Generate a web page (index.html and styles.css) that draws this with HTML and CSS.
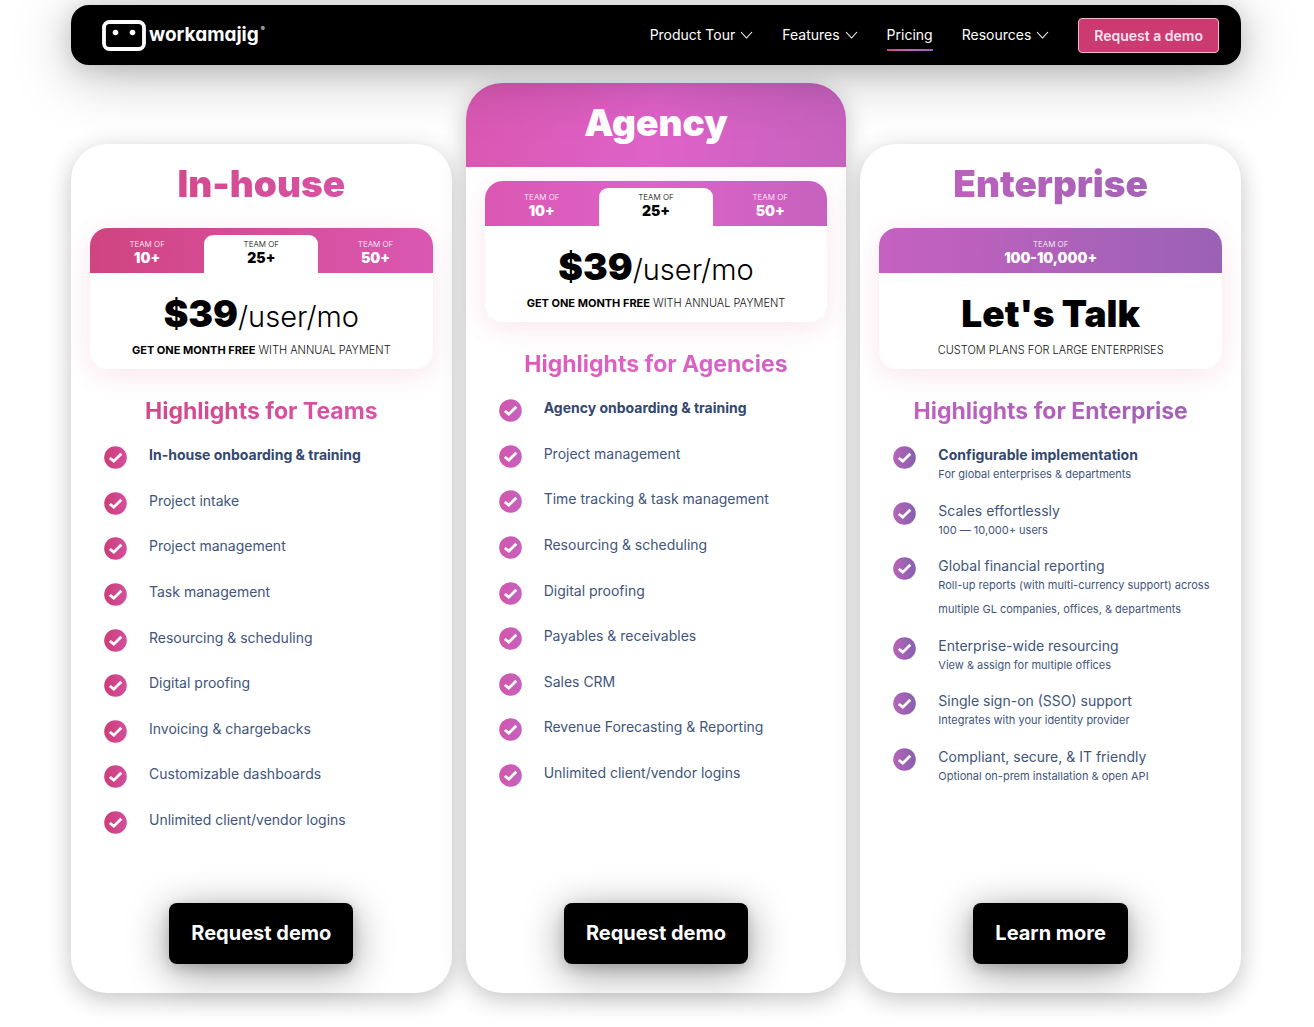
FILE: index.html
```html
<!DOCTYPE html>
<html lang="en">
<head>
<meta charset="utf-8">
<meta name="viewport" content="width=device-width, initial-scale=1">
<title>Workamajig Pricing</title>
<link rel="stylesheet" href="styles.css">
</head>
<body>
<svg class="defs" width="0" height="0" aria-hidden="true">
  <defs>
    <linearGradient id="g-inhouse"><stop offset="0" stop-color="#cd3d76"/><stop offset="1" stop-color="#d44f9f"/></linearGradient>
    <linearGradient id="g-agency"><stop offset="0" stop-color="#d257aa"/><stop offset="1" stop-color="#c561c0"/></linearGradient>
    <linearGradient id="g-enterprise"><stop offset="0" stop-color="#b963b9"/><stop offset="1" stop-color="#8462ae"/></linearGradient>
    <symbol id="tick" viewBox="0 0 23 23">
      <circle cx="11.500" cy="11.500" r="11.300"/>
      <path d="M5.800 12l4 3.200L17.300 7.800" fill="none" stroke="#fff" stroke-width="2.800"/>
    </symbol>
    <symbol id="chevron" viewBox="0 0 13 8">
      <path d="M1 1l5.500 6L12 1" fill="none" stroke="#fff" stroke-width="1.100"/>
    </symbol>
  </defs>
</svg>
<header class="navbar">
  <a class="logo" href="#" aria-label="workamajig home">
    <svg class="logo-mark" viewBox="0 0 44 31" aria-hidden="true">
      <rect x="2" y="2" width="40" height="27" rx="5.500" fill="none" stroke="#fff" stroke-width="3.800"/>
      <circle cx="13.500" cy="12.500" r="2.800" fill="#fff"/>
      <circle cx="30.500" cy="12.500" r="2.800" fill="#fff"/>
    </svg>
    <span class="logo-name">workamajig</span><span class="logo-reg">®</span>
  </a>
  <nav class="menu" aria-label="Main">
    <button class="menu-item" type="button">Product Tour <svg class="chevron" aria-hidden="true"><use href="#chevron"/></svg></button>
    <button class="menu-item" type="button">Features <svg class="chevron" aria-hidden="true"><use href="#chevron"/></svg></button>
    <a class="menu-item current" href="#" aria-current="page">Pricing</a>
    <button class="menu-item" type="button">Resources <svg class="chevron" aria-hidden="true"><use href="#chevron"/></svg></button>
    <a class="demo-link" href="#">Request a demo</a>
  </nav>
</header>

<main class="plans">
  <section class="card inhouse">
    <h2 class="card-title"><span class="tint">In-house</span></h2>
    <div class="price-box">
      <div class="tabs">
        <button class="tab" type="button"><small>TEAM OF</small><b>10+</b></button>
        <button class="tab active" type="button"><small>TEAM OF</small><b>25+</b></button>
        <button class="tab" type="button"><small>TEAM OF</small><b>50+</b></button>
      </div>
      <p class="price"><b>$39</b>/user/mo</p>
      <p class="note"><b>GET ONE MONTH FREE</b> WITH ANNUAL PAYMENT</p>
    </div>
    <h3 class="highlights"><span class="tint">Highlights for Teams</span></h3>
    <ul class="features">
      <li><svg class="tick"><use href="#tick"/></svg><strong>In-house onboarding &amp; training</strong></li>
      <li><svg class="tick"><use href="#tick"/></svg><span>Project intake</span></li>
      <li><svg class="tick"><use href="#tick"/></svg><span>Project management</span></li>
      <li><svg class="tick"><use href="#tick"/></svg><span>Task management</span></li>
      <li><svg class="tick"><use href="#tick"/></svg><span>Resourcing &amp; scheduling</span></li>
      <li><svg class="tick"><use href="#tick"/></svg><span>Digital proofing</span></li>
      <li><svg class="tick"><use href="#tick"/></svg><span>Invoicing &amp; chargebacks</span></li>
      <li><svg class="tick"><use href="#tick"/></svg><span>Customizable dashboards</span></li>
      <li><svg class="tick"><use href="#tick"/></svg><span>Unlimited client/vendor logins</span></li>
    </ul>
    <button class="cta" type="button">Request demo</button>
  </section>

  <section class="card agency">
    <h2 class="card-title">Agency</h2>
    <div class="price-box">
      <div class="tabs">
        <button class="tab" type="button"><small>TEAM OF</small><b>10+</b></button>
        <button class="tab active" type="button"><small>TEAM OF</small><b>25+</b></button>
        <button class="tab" type="button"><small>TEAM OF</small><b>50+</b></button>
      </div>
      <p class="price"><b>$39</b>/user/mo</p>
      <p class="note"><b>GET ONE MONTH FREE</b> WITH ANNUAL PAYMENT</p>
    </div>
    <h3 class="highlights"><span class="tint">Highlights for Agencies</span></h3>
    <ul class="features">
      <li><svg class="tick"><use href="#tick"/></svg><strong>Agency onboarding &amp; training</strong></li>
      <li><svg class="tick"><use href="#tick"/></svg><span>Project management</span></li>
      <li><svg class="tick"><use href="#tick"/></svg><span>Time tracking &amp; task management</span></li>
      <li><svg class="tick"><use href="#tick"/></svg><span>Resourcing &amp; scheduling</span></li>
      <li><svg class="tick"><use href="#tick"/></svg><span>Digital proofing</span></li>
      <li><svg class="tick"><use href="#tick"/></svg><span>Payables &amp; receivables</span></li>
      <li><svg class="tick"><use href="#tick"/></svg><span>Sales CRM</span></li>
      <li><svg class="tick"><use href="#tick"/></svg><span>Revenue Forecasting &amp; Reporting</span></li>
      <li><svg class="tick"><use href="#tick"/></svg><span>Unlimited client/vendor logins</span></li>
    </ul>
    <button class="cta" type="button">Request demo</button>
  </section>

  <section class="card enterprise">
    <h2 class="card-title"><span class="tint">Enterprise</span></h2>
    <div class="price-box">
      <div class="tabs single">
        <div class="tab"><small>TEAM OF</small><b>100-10,000+</b></div>
      </div>
      <p class="price"><b>Let's Talk</b></p>
      <p class="note">CUSTOM PLANS FOR LARGE ENTERPRISES</p>
    </div>
    <h3 class="highlights"><span class="tint">Highlights for Enterprise</span></h3>
    <ul class="features detailed">
      <li><svg class="tick"><use href="#tick"/></svg><div><strong>Configurable implementation</strong><p>For global enterprises &amp; departments</p></div></li>
      <li><svg class="tick"><use href="#tick"/></svg><div>Scales effortlessly<p>100 — 10,000+ users</p></div></li>
      <li><svg class="tick"><use href="#tick"/></svg><div>Global financial reporting<p>Roll-up reports (with multi-currency support) across multiple GL companies, offices, &amp; departments</p></div></li>
      <li><svg class="tick"><use href="#tick"/></svg><div>Enterprise-wide resourcing<p>View &amp; assign for multiple offices</p></div></li>
      <li><svg class="tick"><use href="#tick"/></svg><div>Single sign-on (SSO) support<p>Integrates with your identity provider</p></div></li>
      <li><svg class="tick"><use href="#tick"/></svg><div>Compliant, secure, &amp; IT friendly<p>Optional on-prem installation &amp; open API</p></div></li>
    </ul>
    <button class="cta" type="button">Learn more</button>
  </section>
</main>
</body>
</html>
```
FILE: styles.css
```css
* { box-sizing: border-box; }

body {
  margin: 0;
  padding: 5px 73px 34px 71px;
  background: #fff;
  color: #000;
  font-family: Inter, "Liberation Sans", sans-serif;
  font-size: 14px;
  line-height: 24px;
}

h2, h3, p, ul { margin: 0; padding: 0; }
button { font: inherit; border: 0; padding: 0; background: none; color: inherit; cursor: pointer; }
a { color: inherit; text-decoration: none; }
.defs { position: absolute; }

/* Navigation bar */
.navbar {
  position: relative;
  z-index: 2;
  display: flex;
  align-items: center;
  justify-content: space-between;
  height: 60px;
  padding: 0 22px 0 31px;
  border-radius: 18px;
  background: #000;
  color: #fff;
  box-shadow: 0 10px 60px rgba(0, 0, 0, .25), 0 4px 24px rgba(0, 0, 0, .15);
}
.logo { display: flex; align-items: center; }
.logo-mark { width: 44px; height: 31px; margin-right: 3px; }
.logo-name { font-size: 19px; font-weight: 700; font-feature-settings: "cv11"; }
.logo-reg { align-self: flex-start; font-size: 6px; line-height: 18px; margin-left: 2px; }
.menu { display: flex; align-items: center; gap: 29px; }
.menu-item { display: flex; align-items: center; gap: 5px; }
.chevron { width: 13px; height: 8px; }
.current {
  padding: 4px 0 2px;
  border-bottom: 2px solid;
  border-image: linear-gradient(90deg, #d0457f, #c661c0, #8f63b4) 1;
}
.demo-link {
  height: 35px;
  padding: 0 15px;
  border: 1px solid #f3b9cf;
  border-radius: 4px;
  background: #cb3a70;
  color: #fbe4ee;
  font-weight: 600;
  line-height: 33px;
}

/* Plan cards */
.plans { display: grid; grid-template-columns: repeat(3, 1fr); gap: 14px; padding-top: 18px; }
.card {
  --tint: linear-gradient(90deg, #d04480, #da58b2);
  --icon: url(#g-inhouse);
  display: flex;
  flex-direction: column;
  margin-top: 61px;
  padding-bottom: 29px;
  border-radius: 36px;
  background: #fff;
  box-shadow: 0 6px 24px rgba(0, 0, 0, .24);
}
.agency {
  --tint: linear-gradient(90deg, #da58b2, #de62c8 50%, #c662be);
  --icon: url(#g-agency);
  margin-top: 0;
}
.enterprise {
  --tint: linear-gradient(90deg, #c661c0, #9a62b4);
  --icon: url(#g-enterprise);
}
.card-title { font-size: 37px; font-weight: 900; line-height: 80px; height: 84px; text-align: center; }
.tint { display: block; background: var(--tint); background-clip: text; -webkit-background-clip: text; color: transparent; }
.agency .card-title { margin-bottom: 14px; border-radius: 36px 36px 0 0; background: var(--tint); color: #fff; }

.price-box {
  margin: 0 19px;
  padding-bottom: 7px;
  border-radius: 18px;
  background: #fff;
  text-align: center;
  box-shadow: 0 6px 28px rgba(210, 50, 110, .12);
}
.tabs {
  display: grid;
  grid-template-columns: repeat(3, 1fr);
  height: 45px;
  border-radius: 18px 18px 0 0;
  background: var(--tint);
  color: #fff;
}
.tabs.single { grid-template-columns: 1fr; }
.tab { display: flex; flex-direction: column; align-items: center; justify-content: flex-end; padding-bottom: 8px; }
.tab small { font-size: 8px; font-weight: 300; line-height: 11px; }
.tab b { font-weight: 900; line-height: 15px; }
.tab.active { margin-top: 7px; border-radius: 9px 9px 0 0; background: #fff; color: #000; }
.price {
  display: flex;
  align-items: baseline;
  justify-content: center;
  height: 65px;
  padding-top: 19px;
  font-size: 29px;
  font-weight: 300;
  line-height: 44px;
}
.price b { font-size: 37px; font-weight: 900; }
.note { font-size: 11px; font-weight: 300; color: #111; }
.note b { font-weight: 700; color: #000; }

.highlights { margin: 28px 0 18px; font-size: 23px; font-weight: 700; line-height: 28px; text-align: center; }

.features {
  display: flex;
  flex-direction: column;
  justify-content: space-between;
  min-height: 389px;
  margin: 0 19px 71px 33px;
  list-style: none;
  color: #41557b;
}
.features.detailed { min-height: 345px; }
.features li { display: flex; gap: 22px; }
.features strong { font-weight: 700; color: #33486f; }
.features p { margin-top: -5px; font-size: 11px; line-height: 24px; }
.tick { flex: none; width: 23px; height: 23px; margin-top: 3px; margin-bottom: -2px; fill: var(--icon); }

.cta {
  align-self: center;
  margin-top: auto;
  height: 61px;
  padding: 0 22px 2px;
  border-radius: 8px;
  background: #000;
  color: #fff;
  font-size: 20px;
  font-weight: 700;
  box-shadow: 0 8px 40px rgba(0, 0, 0, .4), 0 4px 12px rgba(0, 0, 0, .15);
}

@media (max-width: 1000px) {
  body { padding-left: 16px; padding-right: 16px; }
  .navbar { flex-wrap: wrap; height: auto; padding: 12px 20px; }
  .plans { grid-template-columns: 1fr; }
  .card { margin-top: 0; }
}
```
